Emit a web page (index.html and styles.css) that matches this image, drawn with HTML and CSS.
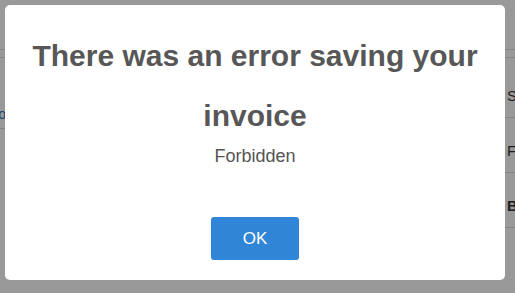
FILE: index.html
```html
<!DOCTYPE html>
<html lang="en">
<head>
<meta charset="utf-8">
<title>Error</title>
<link rel="stylesheet" href="styles.css">
</head>
<body>
<div class="page">
  <div class="topbar"></div>
  <div class="subbar"></div>
  <div class="main">
    <div class="left">
      <div class="left-row"><span class="link">Info</span></div>
    </div>
    <div class="right">
      <div class="row">Status</div>
      <div class="row">Fee</div>
      <div class="row bold">Balance</div>
    </div>
  </div>
</div>
<div class="overlay">
  <div class="modal">
    <h2 class="title">There was an error saving your invoice</h2>
    <div class="content">Forbidden</div>
    <div class="actions"><button class="confirm">OK</button></div>
  </div>
</div>
</body>
</html>
```
FILE: styles.css
```css
html, body {
  margin: 0;
  padding: 0;
  background: #fff;
  font-family: "Liberation Sans", Arial, sans-serif;
  overflow: hidden;
}
.page {
  width: 515px;
  height: 293px;
}
.topbar {
  height: 49px;
  border-bottom: 1px solid #dcdcdc;
}
.subbar {
  height: 7px;
  border-bottom: 1px solid #dcdcdc;
}
.main {
  display: flex;
  justify-content: space-between;
}
.left {
  width: 6px;
  overflow: hidden;
}
.left-row {
  height: 71px;
  border-bottom: 1px solid #dcdcdc;
  display: flex;
  justify-content: flex-end;
  align-items: flex-end;
  padding-bottom: 6px;
  box-sizing: border-box;
}
.link {
  color: #2a6ebb;
  font-size: 14px;
  line-height: 16px;
  white-space: nowrap;
}
.right {
  width: 10px;
  overflow: hidden;
  padding-top: 5px;
}
.row {
  height: 55px;
  box-sizing: border-box;
  padding-top: 23px;
  border-bottom: 1px solid #dcdcdc;
  font-size: 15px;
  line-height: 20px;
  color: #333;
  padding-left: 2px;
  white-space: nowrap;
}
.row.bold {
  font-weight: bold;
}
.overlay {
  position: fixed;
  inset: 0;
  background: rgba(0, 0, 0, 0.4);
}
.modal {
  position: absolute;
  left: 5px;
  top: 5px;
  width: 500px;
  box-sizing: border-box;
  padding: 21px 20px 20px;
  background: #fff;
  border-radius: 5px;
  text-align: center;
}
.title {
  margin: 0;
  color: #575757;
  font-size: 30px;
  font-weight: bold;
  line-height: 60px;
}
.content {
  color: #545454;
  font-size: 18px;
  line-height: 21px;
}
.actions {
  margin-top: 50px;
  display: flex;
  justify-content: center;
}
.confirm {
  background: #3085d6;
  color: #fff;
  border: 0;
  border-radius: 3px;
  font-family: "Liberation Sans", Arial, sans-serif;
  font-size: 17px;
  line-height: 21px;
  padding: 11px 32px;
  margin: 0;
}
```
